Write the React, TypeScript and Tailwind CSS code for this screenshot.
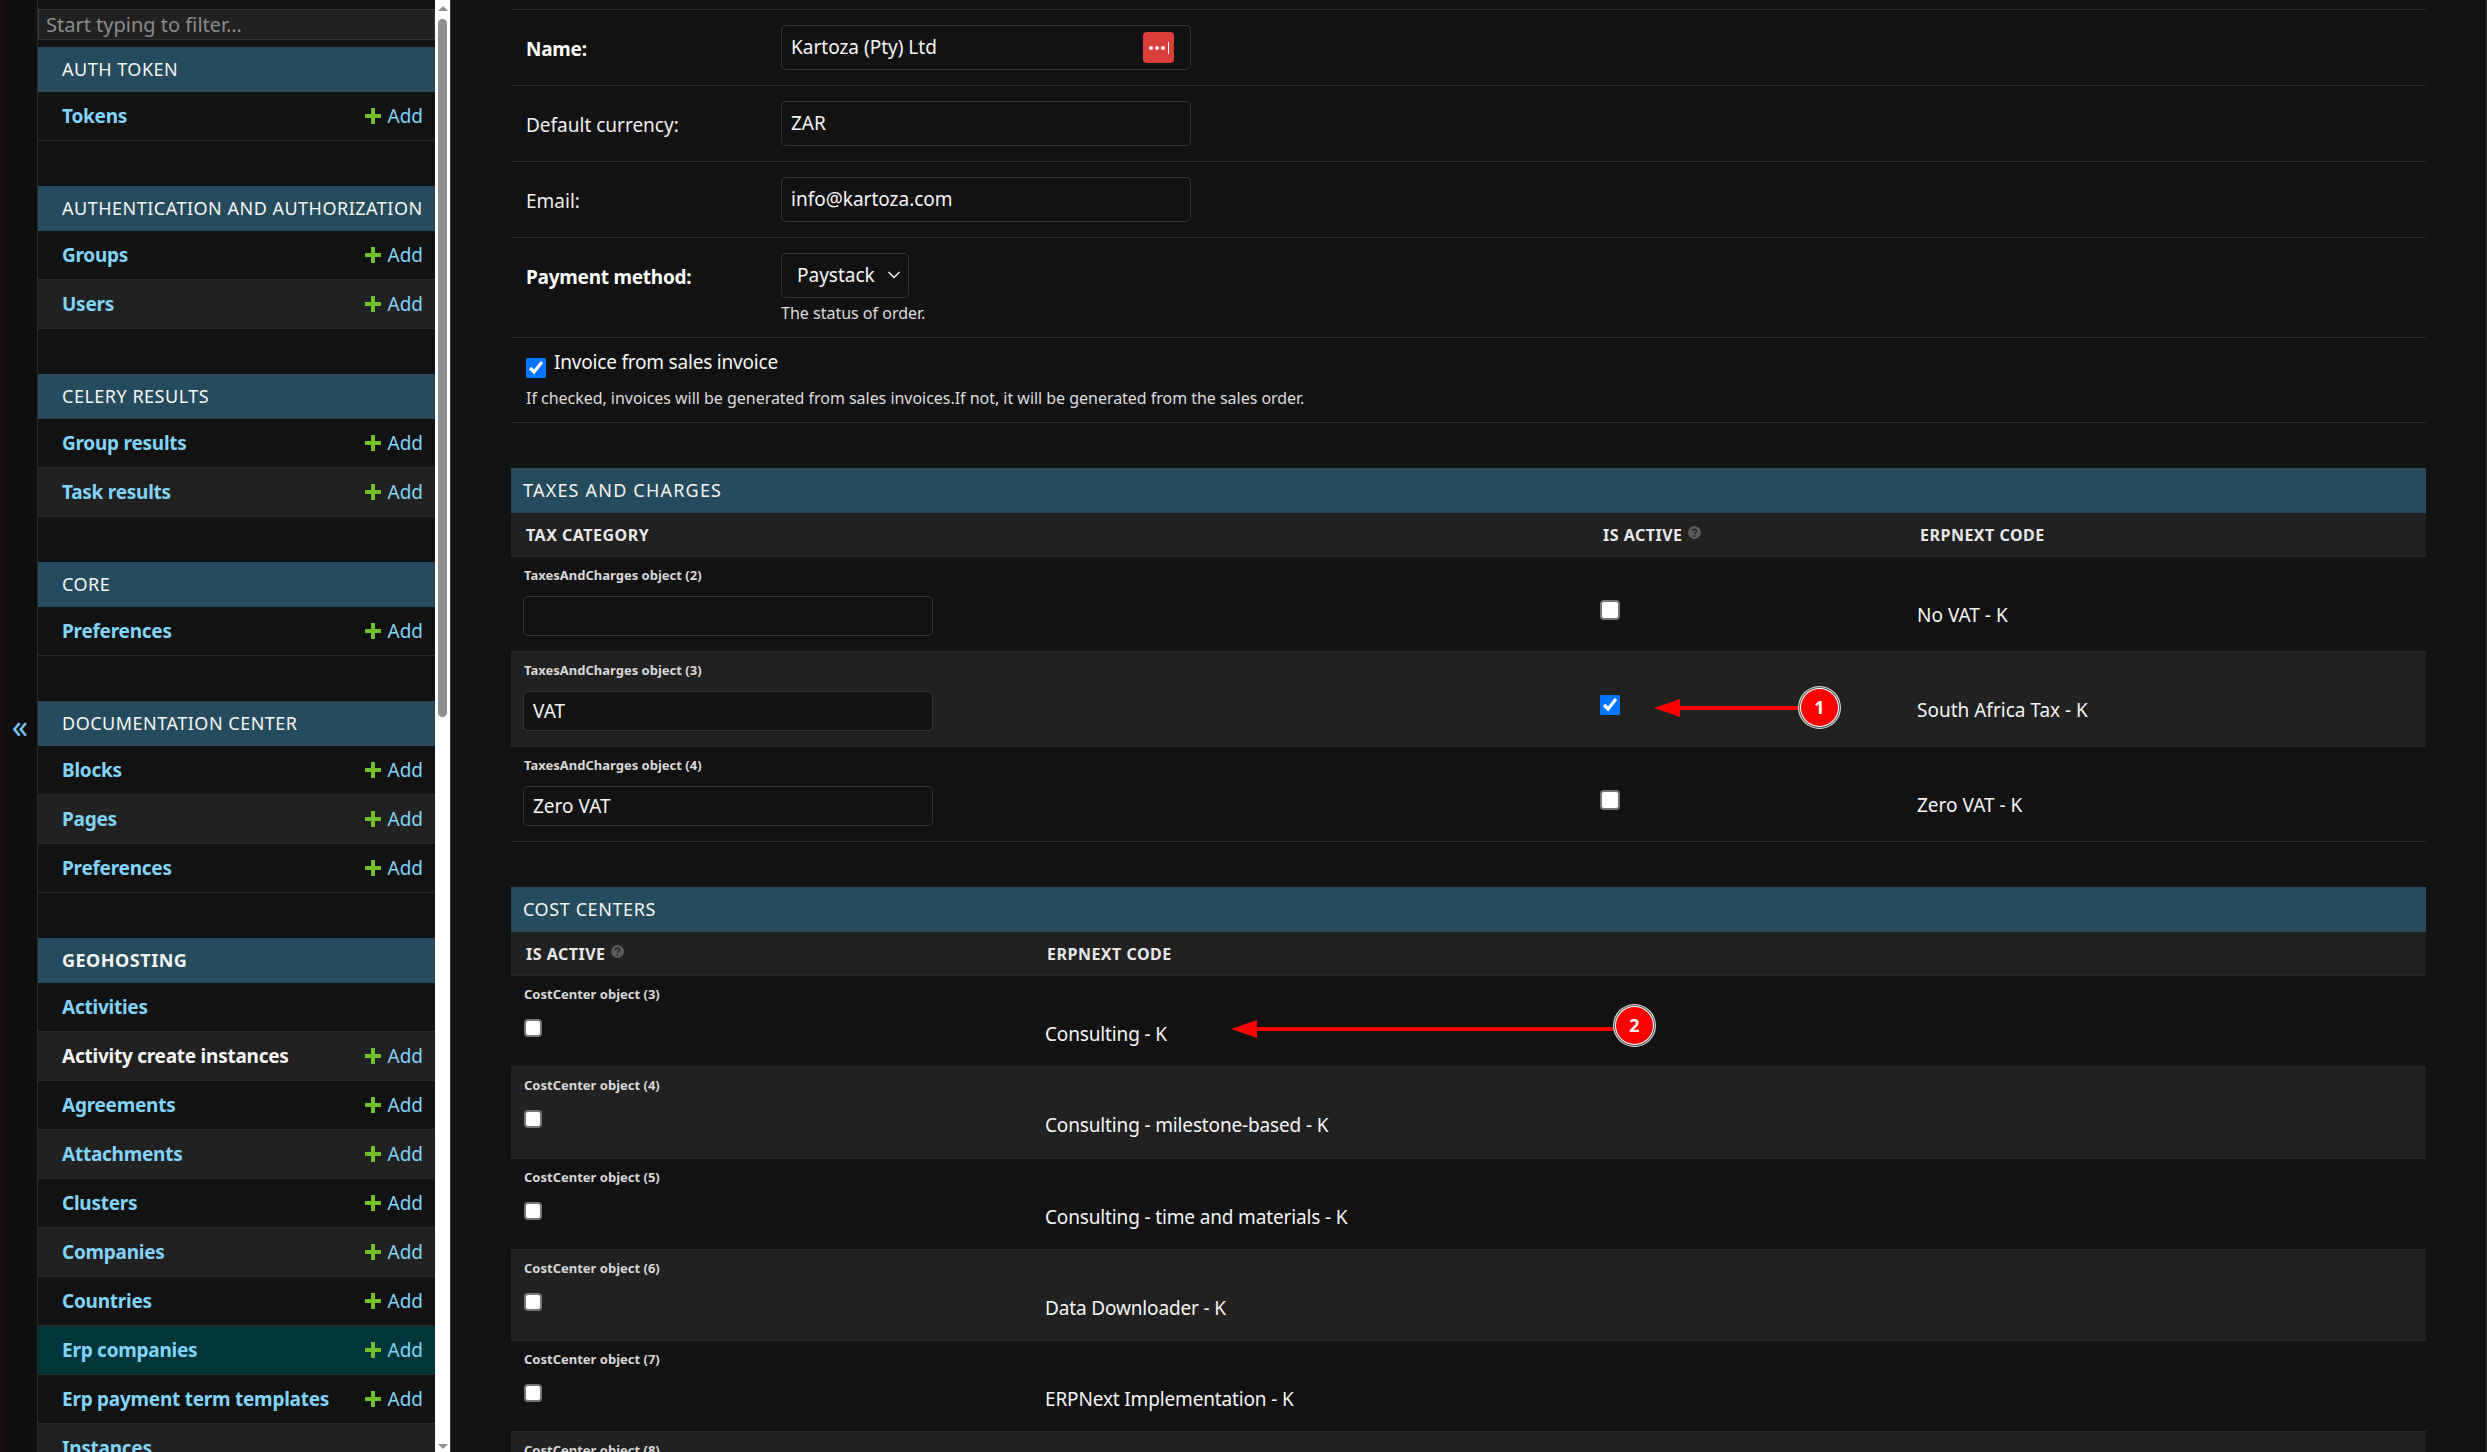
import React from "react";
import { ChevronDown } from "lucide-react";

type SideRow = { name: string; noAdd?: boolean; current?: boolean; plain?: boolean };
type SideModule = { title: string; bold?: boolean; rows: SideRow[] };

const modules: SideModule[] = [
  { title: "Auth Token", rows: [{ name: "Tokens" }] },
  { title: "Authentication and Authorization", rows: [{ name: "Groups" }, { name: "Users" }] },
  { title: "Celery Results", rows: [{ name: "Group results" }, { name: "Task results" }] },
  { title: "Core", rows: [{ name: "Preferences" }] },
  { title: "Documentation Center", rows: [{ name: "Blocks" }, { name: "Pages" }, { name: "Preferences" }] },
  {
    title: "Geohosting",
    bold: true,
    rows: [
      { name: "Activities", noAdd: true },
      { name: "Activity create instances", plain: true },
      { name: "Agreements" },
      { name: "Attachments" },
      { name: "Clusters" },
      { name: "Companies" },
      { name: "Countries" },
      { name: "Erp companies", current: true },
      { name: "Erp payment term templates" },
      { name: "Instances", noAdd: true },
    ],
  },
];

const taxes = [
  { label: "TaxesAndCharges object (2)", value: "", active: false, code: "No VAT - K" },
  { label: "TaxesAndCharges object (3)", value: "VAT", active: true, code: "South Africa Tax - K" },
  { label: "TaxesAndCharges object (4)", value: "Zero VAT", active: false, code: "Zero VAT - K" },
];

const costCenters = [
  { id: 3, code: "Consulting - K" },
  { id: 4, code: "Consulting - milestone-based - K" },
  { id: 5, code: "Consulting - time and materials - K" },
  { id: 6, code: "Data Downloader - K" },
  { id: 7, code: "ERPNext Implementation - K" },
  { id: 8, code: "" },
];

function PlusIcon() {
  return (
    <svg width="16" height="16" viewBox="0 0 16 16" className="shrink-0">
      <path d="M6 0h4v6h6v4h-6v6H6v-6H0V6h6z" fill="#70bf2b" />
    </svg>
  );
}

function HelpIcon() {
  return (
    <svg width="13" height="13" viewBox="0 0 13 13" className="mb-[4px] ml-[5px]">
      <circle cx="6.5" cy="6.5" r="6.5" fill="#5c5c5c" />
      <path d="M4.4 5.2c0-1.2 1-1.9 2.1-1.9s2.1.7 2.1 1.8c0 1.5-2 1.5-2 2.8" fill="none" stroke="#212121" strokeWidth="1.4" />
      <circle cx="6.5" cy="10" r="0.9" fill="#212121" />
    </svg>
  );
}

function Sidebar() {
  return (
    <div className="w-[397px] shrink-0 overflow-hidden pt-[9px]">
      <input
        placeholder="Start typing to filter…"
        className="block h-[31px] w-full border border-[#353535] bg-[#212121] px-[7px] text-[20px] text-white outline-none placeholder:text-[#8c8c8c]"
      />
      <div className="mt-[7px] flex flex-col gap-[45px]">
        {modules.map((m) => (
          <div key={m.title}>
            <div
              className={`flex h-[45px] items-center whitespace-nowrap bg-[#264b5d] pl-[24px] text-[18px] uppercase tracking-[0.5px] text-[#f5f5f5] ${
                m.bold ? "font-bold" : ""
              }`}
            >
              {m.title}
            </div>
            {m.rows.map((r, i) => (
              <div
                key={r.name}
                className={`flex h-[49px] items-center justify-between border-b border-[#282828] pl-[24px] pr-[12px] text-[19px] ${
                  r.current ? "bg-[#00363a]" : i % 2 ? "bg-[#212121]" : "bg-[#121212]"
                }`}
              >
                <span className={`font-bold tracking-[-0.25px] ${r.plain ? "text-[#f5f5f5]" : "text-[#81d4fa]"}`}>{r.name}</span>
                {!r.noAdd && (
                  <span className="flex items-center gap-[6px] text-[#81d4fa]">
                    <PlusIcon />
                    Add
                  </span>
                )}
              </div>
            ))}
          </div>
        ))}
      </div>
    </div>
  );
}

function FakeScrollbar() {
  return (
    <div className="flex w-[16px] shrink-0 flex-col items-center border-r border-[#3a3a3a] bg-white pb-[3px] pt-[6px]">
      <div className="h-0 w-0 border-x-[5px] border-b-[5px] border-x-transparent border-b-[#8f8f8f]" />
      <div className="mt-[8px] h-[698px] w-[9px] rounded-full bg-[#8f8f8f]" />
      <div className="mt-auto h-0 w-0 border-x-[5px] border-t-[5px] border-x-transparent border-t-[#8f8f8f]" />
    </div>
  );
}

// red pointer drawn on top of the change list rows
function Callout({ n, className, shaft, lift }: { n: number; className: string; shaft: number; lift: string }) {
  return (
    <div className={`absolute flex items-center ${className}`}>
      <svg width={shaft} height="18" viewBox={`0 0 ${shaft} 18`} className="shrink-0">
        <path d={`M0 9 L26 0 V7 H${shaft} V11 H26 V18 Z`} fill="#ff0000" />
      </svg>
      <div
        className={`flex h-[37px] w-[37px] shrink-0 items-center justify-center rounded-full bg-[#ff0000] text-[18px] font-bold text-white shadow-[0_0_0_1px_#ffffff,0_0_0_2px_#555555,0_0_0_3px_#dddddd] ${lift}`}
      >
        {n}
      </div>
    </div>
  );
}

function BlankBox({ size }: { size: string }) {
  return <input type="checkbox" readOnly checked={false} className={`m-0 block appearance-none rounded-[4px] border-2 border-[#767676] bg-white ${size}`} />;
}

function FormRow({ label, bold, children, last }: { label: string; bold?: boolean; children: React.ReactNode; last?: boolean }) {
  return (
    <div className={`flex border-b border-[#282828] ${last ? "h-[100px]" : "h-[76px]"} pl-[15px] pt-[15px]`}>
      <div className={`w-[255px] shrink-0 pt-[12px] text-[19px] leading-[24px] ${bold ? "font-bold tracking-[-0.25px] text-white" : "text-[#eeeeee]"}`}>{label}</div>
      <div>{children}</div>
    </div>
  );
}

const textInput =
  "block h-[45px] w-[410px] rounded-[5px] border border-[#333333] bg-[#121212] pb-[2px] pl-[9px] pr-[10px] text-[19px] text-[#f5f5f5] outline-none";

function TaxesTable() {
  return (
    <section className="mt-[45px]">
      <h2 className="flex h-[45px] items-center bg-[#264b5d] pl-[12px] text-[18px] font-normal uppercase tracking-[1.2px] text-[#f5f5f5]">Taxes and Charges</h2>
      <div className="grid h-[44px] grid-cols-[1077px_317px_1fr] items-center border-b border-[#282828] bg-[#212121] text-[16px] font-bold uppercase tracking-[0.5px] text-[#e8e8e8]">
        <div className="pl-[15px]">Tax category</div>
        <div className="flex items-center pl-[15px]">
          Is active
          <HelpIcon />
        </div>
        <div className="pl-[15px]">ERPNext code</div>
      </div>
      {taxes.map((t, i) => (
        <div
          key={t.label}
          className={`relative grid h-[95px] grid-cols-[1077px_317px_1fr] border-b border-[#282828] ${i % 2 ? "bg-[#212121]" : "bg-[#121212]"}`}
        >
          <div className="pl-[12px] pt-[8px]">
            <div className="pl-px text-[13px] font-bold leading-[20px] text-[#d8d8d8]">{t.label}</div>
            <input
              readOnly
              defaultValue={t.value}
              className="mt-[11px] block h-[40px] w-[410px] rounded-[5px] border border-[#333333] bg-[#121212] px-[9px] text-[19px] text-[#f5f5f5] outline-none"
            />
          </div>
          <div className="pl-[12px] pt-[43px]">
            {t.active ? (
              <input type="checkbox" readOnly checked className="m-0 block h-[20px] w-[20px] accent-[#0075ff]" />
            ) : (
              <BlankBox size="h-[20px] w-[20px]" />
            )}
          </div>
          <div className="pl-[12px] pt-[46px] text-[19px] leading-[24px] text-[#f5f5f5]">{t.code}</div>
          {t.active && <Callout n={1} className="left-[1143px] top-[37px]" shaft={147} lift="" />}
        </div>
      ))}
    </section>
  );
}

function CostCentersTable() {
  return (
    <section className="mt-[45px]">
      <h2 className="flex h-[45px] items-center bg-[#264b5d] pl-[12px] text-[18px] font-normal uppercase tracking-[0.6px] text-[#f5f5f5]">Cost centers</h2>
      <div className="grid h-[44px] grid-cols-[521px_1fr] items-center border-b border-[#282828] bg-[#212121] text-[16px] font-bold uppercase tracking-[0.5px] text-[#e8e8e8]">
        <div className="flex items-center pl-[15px]">
          Is active
          <HelpIcon />
        </div>
        <div className="pl-[15px]">ERPNext code</div>
      </div>
      {costCenters.map((c, i) => (
        <div
          key={c.id}
          className={`relative grid h-[91.3px] grid-cols-[521px_1fr] border-b border-[#282828] ${i % 2 ? "bg-[#212121]" : "bg-[#121212]"}`}
        >
          <div className="pl-[13px] pt-[8px]">
            <div className="text-[13px] font-bold leading-[20px] text-[#d8d8d8]">CostCenter object ({c.id})</div>
            <div className="mt-[15px]">
              <BlankBox size="h-[18px] w-[18px]" />
            </div>
          </div>
          <div className="pl-[13px] pt-[46px] text-[19px] leading-[24px] tracking-[-0.15px] text-[#f5f5f5]">{c.code}</div>
          {c.id === 3 && <Callout n={2} className="left-[720px] top-[37px]" shaft={385} lift="-mt-[6px]" />}
        </div>
      ))}
    </section>
  );
}

export default function App() {
  return (
    <div className="flex h-screen overflow-hidden bg-[#121212] font-['Noto_Sans',sans-serif] text-[#f5f5f5]">
      <div className="flex w-[38px] shrink-0 items-center justify-center border-r border-[#2a2a2a] border-l-[3px] border-l-[#1a0c15] bg-[#0f0f0f] text-[32px] leading-none text-[#79c6f5]">
        «
      </div>
      <Sidebar />
      <FakeScrollbar />
      <main className="min-w-0 flex-1 border-r border-[#333333] pl-[60px] pr-[60px] pt-[9px]">
        <div className="border-t border-[#282828]">
          <FormRow label="Name:" bold>
            <div className="relative">
              <input readOnly defaultValue="Kartoza (Pty) Ltd" className={textInput} />
              <div className="absolute right-[17px] top-[7px] flex h-[31px] w-[31px] items-center justify-center gap-[2px] rounded-[4px] bg-[#db3f3a]">
                <span className="h-[4px] w-[4px] rounded-full bg-white" />
                <span className="h-[4px] w-[4px] rounded-full bg-white" />
                <span className="h-[4px] w-[4px] rounded-full bg-white" />
                <span className="ml-px h-[12px] w-px bg-white" />
              </div>
            </div>
          </FormRow>
          <FormRow label="Default currency:">
            <input readOnly defaultValue="ZAR" className={textInput} />
          </FormRow>
          <FormRow label="Email:">
            <input readOnly defaultValue="info@kartoza.com" className={textInput} />
          </FormRow>
          <FormRow label="Payment method:" bold last>
            <div className="relative w-[128px]">
              <select className="block h-[45px] w-full appearance-none rounded-[5px] border border-[#333333] bg-[#121212] pl-[15px] text-[19px] text-[#f5f5f5] outline-none">
                <option>Paystack</option>
              </select>
              <ChevronDown size={20} strokeWidth={2} className="pointer-events-none absolute right-[5px] top-[12px] text-[#e8e8e8]" />
            </div>
            <p className="mt-[5px] text-[16px] leading-[20px] text-[#dddddd]">The status of order.</p>
          </FormRow>
          <div className="h-[85px] border-b border-[#282828] pl-[15px] pt-[12px]">
            <div className="flex gap-[8px]">
              <input type="checkbox" readOnly checked className="m-0 mt-[8px] block h-[20px] w-[20px] accent-[#0075ff]" />
              <label className="text-[19px] leading-[24px] tracking-[-0.2px] text-[#f5f5f5]">Invoice from sales invoice</label>
            </div>
            <p className="mt-[10px] text-[16px] leading-[20px] tracking-[-0.03px] text-[#dddddd]">
              If checked, invoices will be generated from sales invoices.If not, it will be generated from the sales order.
            </p>
          </div>
        </div>
        <TaxesTable />
        <CostCentersTable />
      </main>
    </div>
  );
}
